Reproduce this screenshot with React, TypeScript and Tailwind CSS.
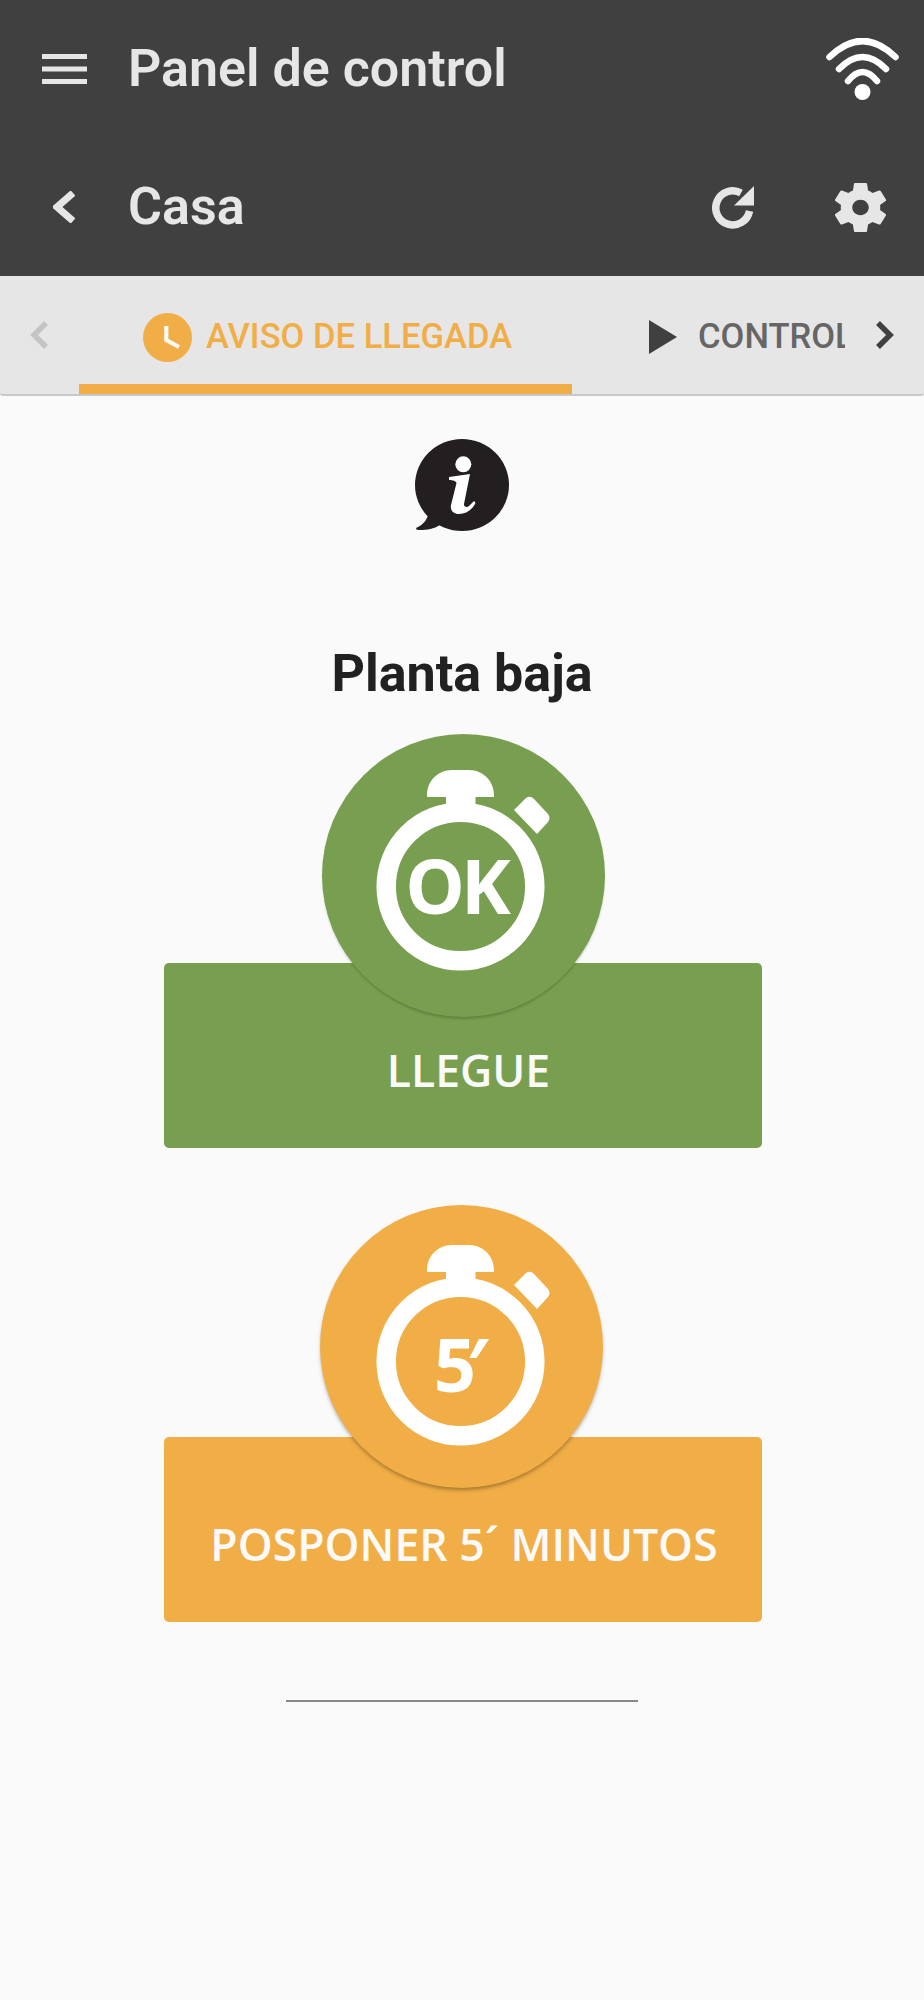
const Hamburger = () => (
  <svg width="45" height="30" viewBox="0 0 45 30" fill="#e6e6e6">
    <rect x="0" y="0" width="45" height="5" />
    <rect x="0" y="12.5" width="45" height="5" />
    <rect x="0" y="25" width="45" height="5" />
  </svg>
);

const Wifi = () => (
  <svg width="73" height="62" viewBox="0 0 73 62" fill="none" stroke="#fff" strokeWidth="6.5" strokeLinecap="round">
    <path d="M3.500 19Q36.5 -13 69.500 19" />
    <path d="M13 31Q36.5 7 60 31" />
    <path d="M22 43Q36.500 25 51 43" />
    <circle cx="36.5" cy="54" r="8" fill="#fff" stroke="none" />
  </svg>
);

const Chevron = ({ dir, color, w, h, sw }: { dir: "left" | "right"; color: string; w: number; h: number; sw: number }) => (
  <svg width={w} height={h} viewBox={`0 0 ${w} ${h}`} fill="none" stroke={color} strokeWidth={sw}>
    {dir === "left" ? (
      <path d={`M${w - 2} 2L4 ${h / 2}L${w - 2} ${h - 2}`} />
    ) : (
      <path d={`M2 2L${w - 4} ${h / 2}L2 ${h - 2}`} />
    )}
  </svg>
);

const Reload = () => (
  <svg width="42" height="43" viewBox="0 0 42 43">
    <path d="M37.5 25A17 17 0 1 1 29 7" fill="none" stroke="#e6e6e6" strokeWidth="7.5" />
    <path d="M42 0V19.5H22Z" fill="#e6e6e6" />
  </svg>
);

const Gear = () => (
  <svg width="51" height="51" viewBox="2.7 2 18.6 20" preserveAspectRatio="none" fill="#e6e6e6">
    <path d="M19.14 12.94c.04-.3.06-.61.06-.94 0-.32-.02-.64-.07-.94l2.03-1.58a.49.49 0 0 0 .12-.61l-1.92-3.32a.488.488 0 0 0-.59-.22l-2.39.96c-.5-.38-1.03-.7-1.62-.94l-.36-2.54a.484.484 0 0 0-.48-.41h-3.84c-.24 0-.43.17-.47.41l-.36 2.54c-.59.24-1.13.57-1.62.94l-2.39-.96c-.22-.08-.47 0-.59.22L2.74 8.87c-.12.21-.08.47.12.61l2.03 1.58c-.05.3-.09.63-.09.94s.02.64.07.94l-2.03 1.58a.49.49 0 0 0-.12.61l1.92 3.32c.12.22.37.29.59.22l2.39-.96c.5.38 1.03.7 1.62.94l.36 2.54c.05.24.24.41.48.41h3.84c.24 0 .44-.17.47-.41l.36-2.54c.59-.24 1.13-.56 1.62-.94l2.39.96c.22.08.47 0 .59-.22l1.92-3.32c.12-.22.07-.47-.12-.61l-2.01-1.58zM12 15c-1.65 0-3-1.35-3-3s1.35-3 3-3 3 1.35 3 3-1.35 3-3 3z" />
  </svg>
);

const ClockBadge = () => (
  <svg width="49" height="49" viewBox="0 0 49 49">
    <circle cx="24.5" cy="24.5" r="24.5" fill="#f2ae46" />
    <path d="M23.3 13V27L36 34" fill="none" stroke="#fafafa" strokeWidth="4.2" />
  </svg>
);

const Play = () => (
  <svg width="28" height="34" viewBox="0 0 28 34" fill="#404040">
    <path d="M0 0L28 17L0 34Z" />
  </svg>
);

const InfoBubble = () => (
  <svg width="94" height="92" viewBox="0 0 94 92">
    <ellipse cx="47" cy="46" rx="47" ry="46" fill="#231f20" />
    <path d="M14 70C14 80 8 86 1 89C1 91 3 91 5 91C12 91 19 90 25 86Z" fill="#231f20" />
    <circle cx="48.3" cy="25.3" r="8" fill="#fff" />
    <path d="M34 38L55 35L49 65C48.5 68 52 69 54 67L59 62L60.500 64C57 71 51 75 44 75C38 75 35 71 36 66L41.5 44C41 42 38 41 34 41Z" fill="#fff" />
  </svg>
);

const Stopwatch = ({ label, textClass }: { label: string; textClass: string }) => (
  <div className="relative w-[169px] h-[200px]">
    <svg className="absolute inset-0 overflow-visible" width="169" height="200" viewBox="0 0 169 200" fill="#fff">
      <path d="M51 27V25C51 11 62 0 76 0H93C107 0 118 11 118 25V27H99.500V37H70V27Z" />
      <circle cx="84.5" cy="116.5" r="74.3" fill="none" stroke="#fff" strokeWidth="19.5" />
      <path d="M138 40L150 28Q154 25 158 29L172 44Q175 48 172 52L161 64Z" />
    </svg>
    <div className={`absolute inset-x-0 top-[85px] h-[60px] flex items-center justify-center font-['Open_Sans',sans-serif] font-bold text-white ${textClass}`}>
      {label}
    </div>
  </div>
);

const ActionButton = ({
  color,
  icon,
  label,
  circleClass,
  barClass,
  labelClass,
}: {
  color: string;
  icon: React.ReactNode;
  label: string;
  circleClass: string;
  barClass: string;
  labelClass: string;
}) => (
  <div className="flex flex-col items-center w-[598px]">
    <div className={`relative z-10 w-[283px] h-[283px] rounded-full flex items-start justify-center ${color} ${circleClass}`}>
      {icon}
    </div>
    <div className={`w-full h-[185px] rounded-[5px] flex items-end justify-center ${color} ${barClass}`}>
      <span className={`mb-[55px] font-['Open_Sans',sans-serif] font-semibold text-[44.5px] leading-[46px] text-[#fafafa] ${labelClass}`}>{label}</span>
    </div>
  </div>
);

export default function App() {
  return (
    <div className="w-[924px] h-[2000px] bg-[#fafafa] font-['Roboto',sans-serif]">
      <header className="bg-[#404040] text-[#e6e6e6]">
        <div className="h-[138px] flex items-center">
          <div className="w-[128px] pl-[42px] flex">
            <Hamburger />
          </div>
          <h1 className="flex-1 text-[52px] font-semibold leading-none">Panel de control</h1>
          <div className="pr-[25px] flex">
            <Wifi />
          </div>
        </div>
        <div className="h-[138px] flex items-center">
          <div className="w-[128px] pl-[53px] flex">
            <Chevron dir="left" color="#e6e6e6" w={22} h={32} sw={7} />
          </div>
          <h2 className="flex-1 text-[52px] font-semibold leading-none">Casa</h2>
          <div className="flex items-center gap-[81px] pr-[38px]">
            <Reload />
            <Gear />
          </div>
        </div>
      </header>

      <nav className="h-[120px] bg-[#e6e6e6] border-b-2 border-[#c8c8c8] rounded-b-[3px] flex items-stretch">
        <div className="w-[79px] pl-[30px] flex items-center">
          <Chevron dir="left" color="#c4c4c4" w={18} h={28} sw={5.5} />
        </div>
        <div className="w-[766px] overflow-hidden flex">
          <div className="w-[493px] shrink-0 h-[118px] pt-[14px] border-b-[10px] border-[#f2ae46] flex items-center pl-[64px] gap-[14px]">
            <ClockBadge />
            <span className="text-[34.6px] font-medium text-[#f2ae46] whitespace-nowrap">AVISO DE LLEGADA</span>
          </div>
          <div className="shrink-0 h-[118px] pt-[14px] pb-[10px] flex items-center pl-[77px] gap-[21px]">
            <Play />
            <span className="text-[34.6px] font-medium text-[#666666] whitespace-nowrap">CONTROL</span>
          </div>
        </div>
        <div className="pl-[31px] flex items-center">
          <Chevron dir="right" color="#404040" w={18} h={28} sw={5.5} />
        </div>
      </nav>

      <main className="flex flex-col items-center">
        <div className="mt-[43px] flex">
          <InfoBubble />
        </div>
        <h3 className="mt-[113px] text-[52px] font-bold leading-[60px] text-[#212121]">Planta baja</h3>
        <div className="mt-[30px] ml-[2px]">
          <ActionButton
            color="bg-[#789f50]"
            circleClass="pt-[36px] pr-[6px] shadow-[0_3px_3px_-1px_rgba(0,0,0,0.2)]"
            barClass="-mt-[54px]"
            labelClass="pl-[11px]"
            label="LLEGUE"
            icon={<Stopwatch label="OK" textClass="text-[75px] tracking-[-4px] pr-[8px]" />}
          />
        </div>
        <div className="mt-[57px] ml-[2px]">
          <ActionButton
            color="bg-[#f2ae46]"
            circleClass="pt-[40px] pr-[2px] -translate-x-[2px] shadow-[0_3px_4px_-1px_rgba(0,0,0,0.35)]"
            barClass="-mt-[51px]"
            labelClass="pl-[2px]"
            label="POSPONER 5´ MINUTOS"
            icon={<Stopwatch label="5′" textClass="text-[74px] tracking-[-10px] pr-[8px] pt-[6px]" />}
          />
        </div>
        <div className="mt-[78px] w-[352px] h-[2px] bg-[#888888]" />
      </main>
    </div>
  );
}
